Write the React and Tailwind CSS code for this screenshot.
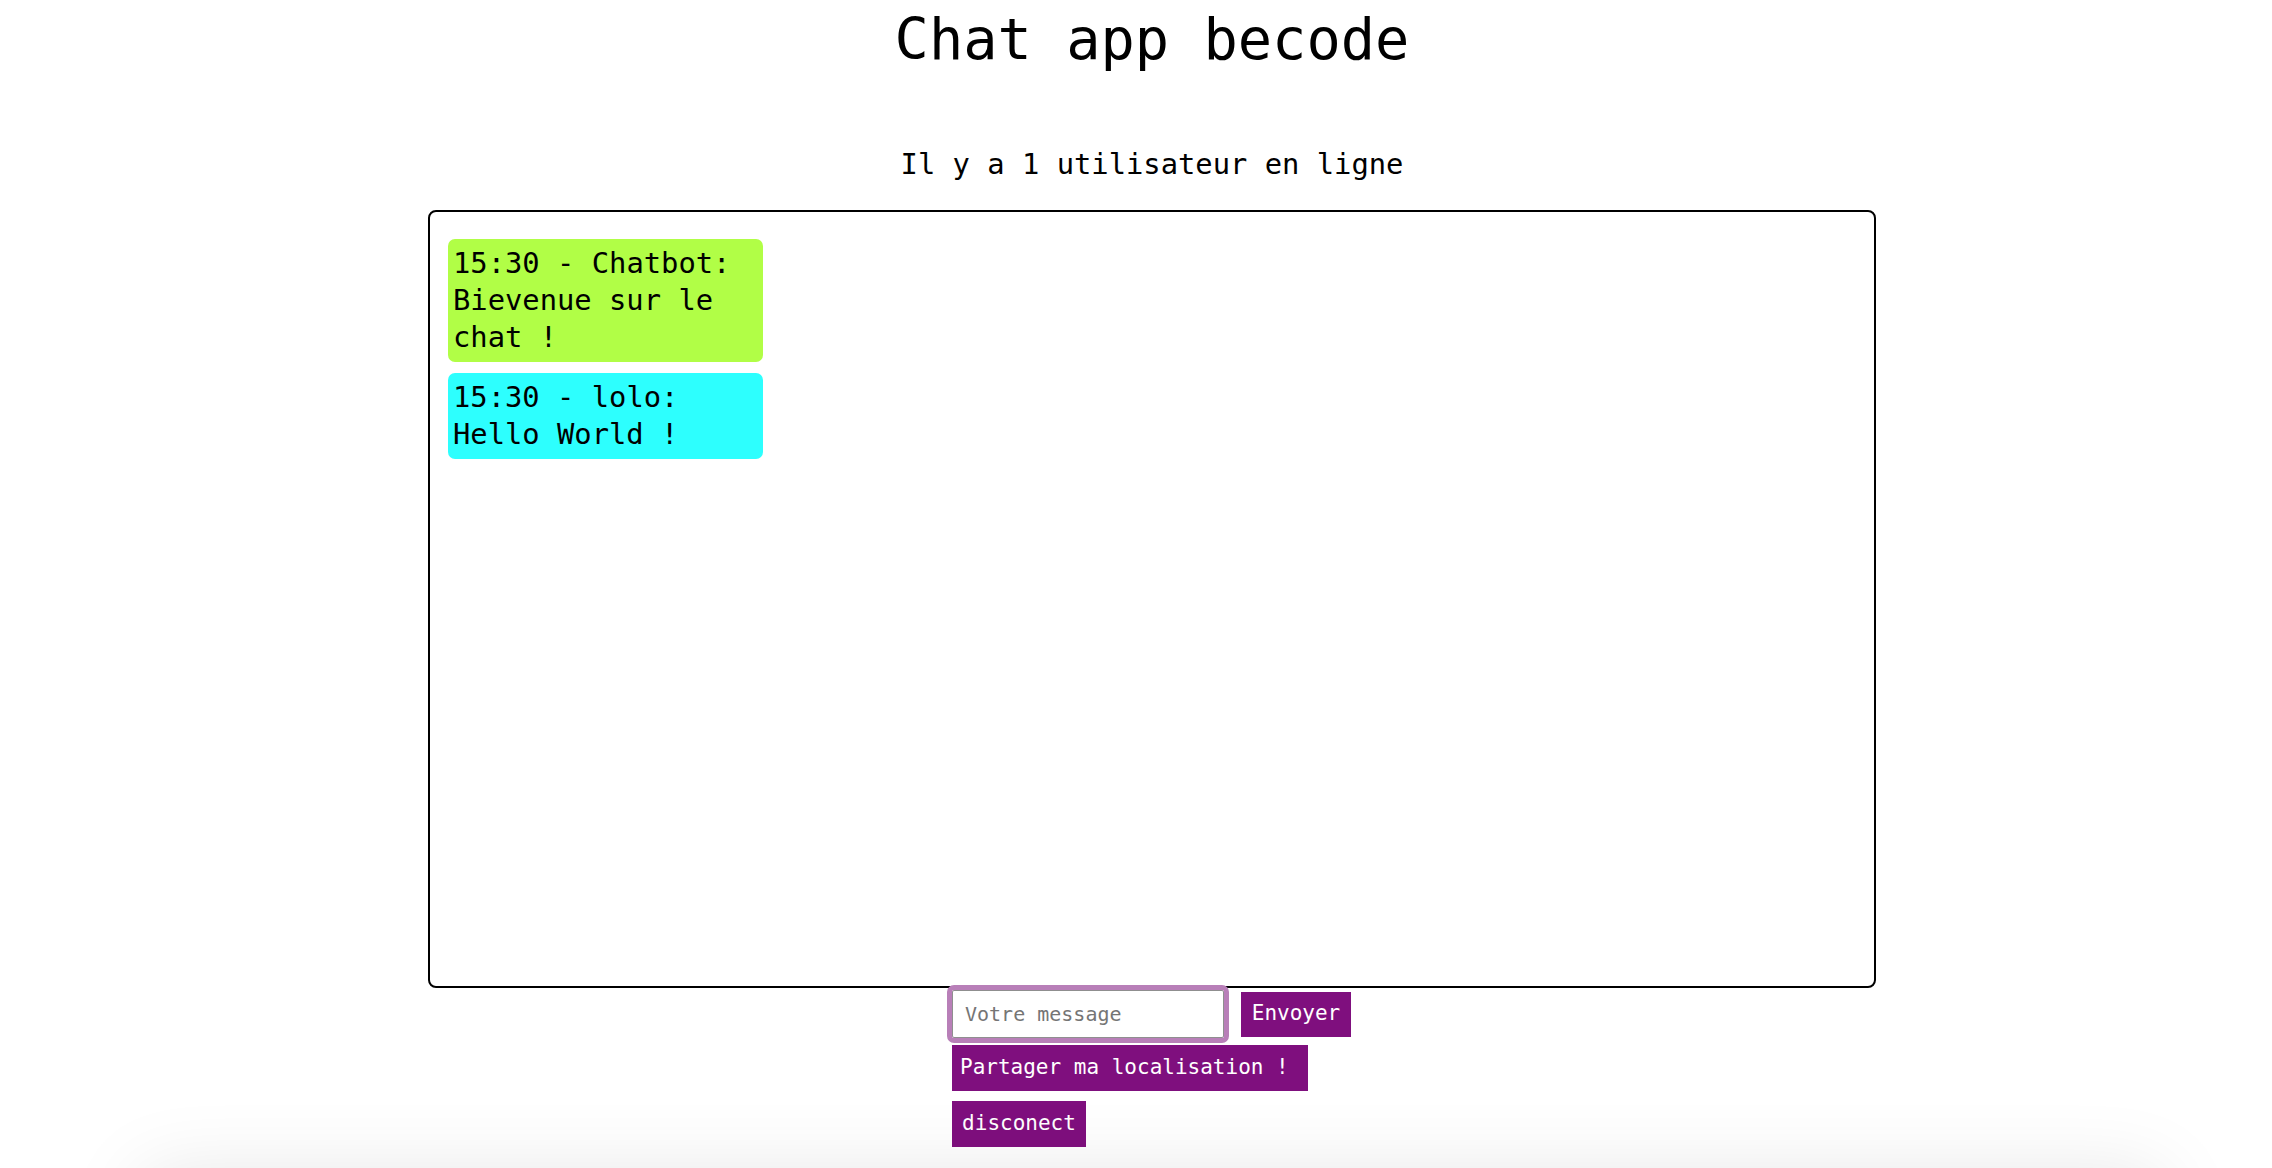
export default function App() {
  const messages = [
    { id: 1, time: "15:30", user: "Chatbot", text: "Bievenue sur le chat !", bot: true },
    { id: 2, time: "15:30", user: "lolo", text: "Hello World !", bot: false },
  ];

  return (
    <div className="min-h-screen bg-white pl-[32px] font-['DejaVu_Sans_Mono',monospace] text-black">
      <div className="flex flex-col items-center">
        <h1 className="mt-[6px] text-[57px] font-normal leading-[66px]">Chat app becode</h1>
        <p className="mt-[71px] text-[28.8px]">Il y a 1 utilisateur en ligne</p>

        <div className="mt-[24px] h-[778px] w-[1448px] rounded-[8px] border-2 border-black px-[18px] pt-[27px]">
          <div className="flex flex-col gap-[11px]">
            {messages.map((m) => (
              <div
                key={m.id}
                className={
                  "w-[315px] rounded-[7px] px-[5px] py-[6px] text-[28.8px] leading-[37px] " +
                  (m.bot ? "bg-[#b1fe46]" : "bg-[#2dfffe]")
                }
              >
                {m.time} - {m.user}: {m.text}
              </div>
            ))}
          </div>
        </div>

        <div className="flex w-[400px] flex-col items-start">
          <div className="mt-[2px] flex items-center gap-[17px]">
            <input
              type="text"
              placeholder="Votre message"
              className="h-[48px] w-[272px] rounded-[2px] border border-[#8f8f8f] px-[12px] text-[20px] outline-[5px] outline-solid outline-[#b87fb8] placeholder:text-[#757575] font-['DejaVu_Sans_Mono',monospace]"
            />
            <button className="h-[45px] w-[110px] bg-[#7f0f7e] text-center text-[21px] text-white">
              Envoyer
            </button>
          </div>
          <button className="mt-[7px] h-[46px] w-[356px] bg-[#7f0f7e] pl-[8px] text-left text-[21px] text-white">
            Partager ma localisation !
          </button>
          <button className="mt-[10px] h-[46px] w-[134px] bg-[#7f0f7e] text-center text-[21px] text-white">
            disconect
          </button>
        </div>

        <div className="mt-[27px] h-[200px] w-[2020px] bg-white shadow-[0_0_80px_rgba(0,0,0,0.1)]"></div>
      </div>
    </div>
  );
}
